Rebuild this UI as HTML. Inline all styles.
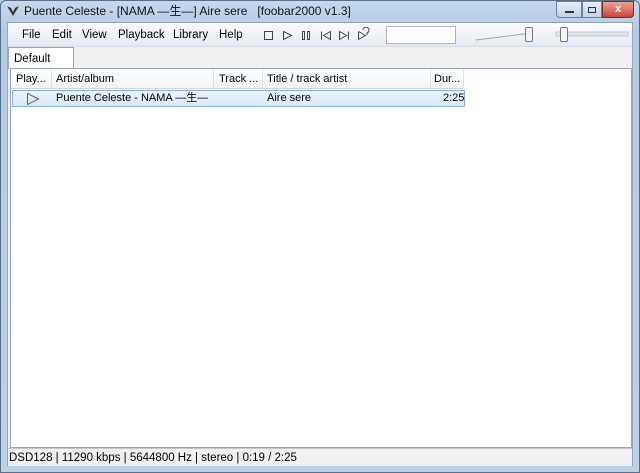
<!DOCTYPE html>
<html><head><meta charset="utf-8"><style>
*{margin:0;padding:0;box-sizing:border-box}
body{width:640px;height:473px;overflow:hidden;background:#b9d1ea;font-family:"Liberation Sans","Noto Sans CJK JP",sans-serif;font-size:11px;line-height:13px;color:#000;position:relative}
.frame{position:absolute;left:0;top:0;width:640px;height:473px;background:linear-gradient(#c5d9ee,#b4cbe6 30px,#bcd2ea);border:1px solid #5a6f88;border-radius:6px 6px 0 0}
.title{position:absolute;left:24px;top:4px;font-size:12px;line-height:14px;color:#111}
.client{position:absolute;left:7px;top:22px;width:626px;height:444px;background:#f0f0f0;border:1px solid #8ea3bc}
.bar{position:absolute;left:0;top:0;width:624px;height:24px;background:linear-gradient(#fbfcfe,#e3e9f3);border-bottom:1px solid #d5dce6}
.menu span{position:absolute;top:5px;font-size:11.5px;line-height:14px}
.list{position:absolute;left:2px;top:45px;width:622px;height:380px;background:#fff;border:1px solid #9aa6b4}
.hdr{position:absolute;left:0;top:0;width:453px;height:20px;background:linear-gradient(#fff,#f1f3f6);border-bottom:1px solid #d5d5d5}
.hdr span{position:absolute;top:4px}
.sep{position:absolute;top:0;width:1px;height:20px;background:#dde1e6}
.row{position:absolute;left:1px;top:21px;width:453px;height:17px;background:linear-gradient(#eef5fd,#d8e8f9);border:1px solid #84acdd}
.row span{position:absolute;top:1px;line-height:13px;height:14px;overflow:hidden}
.status{position:absolute;left:0;top:425px;width:624px;height:18px;background:#f0f0f0;border-top:1px solid #c8c8c8}
</style></head><body>
<div class="frame"></div>
<svg style="position:absolute;left:6px;top:4px" width="14" height="13"><path d="M1 2 L7 12 L13 2 L9 4 L7 8 L5 4Z" fill="#333"/></svg>
<div class="title">Puente Celeste - [NAMA —生—] Aire sere &nbsp; [foobar2000 v1.3]</div>
<div style="position:absolute;left:556px;top:1px;width:26px;height:17px;border:1px solid #6d7f96;border-radius:0 0 0 4px;background:linear-gradient(#e6eef8,#c2d3e8)"><div style="margin:9px 8px;width:9px;height:2px;background:#333"></div></div>
<div style="position:absolute;left:582px;top:1px;width:20px;height:17px;border:1px solid #6d7f96;background:linear-gradient(#e6eef8,#c2d3e8)"><div style="margin:5px 5px;width:8px;height:6px;border:1px solid #333"></div></div>
<div style="position:absolute;left:602px;top:1px;width:32px;height:17px;border:1px solid #7a2a22;border-radius:0 0 4px 0;background:linear-gradient(#e8a59a,#c9463a);color:#fff;font-weight:bold;text-align:center;font-size:11px;line-height:15px">x</div>
<div class="client">
<div class="bar">
<div class="menu"><span style="left:14px">File</span><span style="left:44px">Edit</span><span style="left:74px">View</span><span style="left:110px">Playback</span><span style="left:165px">Library</span><span style="left:211px">Help</span></div>
<svg style="position:absolute;left:250px;top:4px" width="130" height="17" fill="none" stroke="#444" stroke-width="1">
<rect x="6.5" y="4.5" width="8" height="8"/><path d="M25.5 4.5 L33.5 8.5 L25.5 12.5Z"/><rect x="44.5" y="4.5" width="2" height="8"/><rect x="49.5" y="4.5" width="2" height="8"/>
<path d="M63.5 4.5v8M72.5 4.5 L65.5 8.5 L72.5 12.5Z"/><path d="M90.5 4.5v8M81.5 4.5 L88.5 8.5 L81.5 12.5Z"/><path d="M100.5 4.5v8M100.5 4.5 L107.5 8.5 L100.5 12.5M105 3a3 3 0 1 1 4 3v2"/></svg>
<div style="position:absolute;left:378px;top:3px;width:70px;height:18px;background:#fff;border:1px solid #abb3be"></div>
<svg style="position:absolute;left:464px;top:3px" width="160" height="18"><path d="M4 14 L60 7" stroke="#9aa6b6"/><rect x="53.5" y="1.5" width="7" height="14" rx="1.5" fill="#f4f4f4" stroke="#777"/><rect x="84" y="6" width="72" height="4" fill="#e2e6ec" stroke="#c3cad4"/><rect x="88.5" y="1.5" width="7" height="14" rx="1.5" fill="#f4f4f4" stroke="#777"/></svg>
</div>
<div style="position:absolute;left:0;top:24px;width:66px;height:22px;background:#fff;border:1px solid #9aa6b4;border-bottom:none;padding:4px 5px;font-size:11.5px;line-height:14px">Default</div>
<div class="list">
<div class="hdr"><span style="left:5px">Play...</span><div class="sep" style="left:40px"></div><span style="left:45px">Artist/album</span><div class="sep" style="left:202px"></div><span style="left:208px">Track ...</span><div class="sep" style="left:251px"></div><span style="left:256px">Title / track artist</span><div class="sep" style="left:419px"></div><span style="left:423px">Dur...</span><div class="sep" style="left:452px"></div></div>
<div class="row"><svg style="position:absolute;left:13px;top:1px" width="14" height="14"><path d="M1.5 1.5 L12.5 7 L1.5 12.5Z" fill="none" stroke="#666"/></svg><span style="left:43px">Puente Celeste - NAMA —生—</span><span style="left:254px">Aire sere</span><span style="left:430px">2:25</span></div>
</div>
<div class="status"><span style="position:absolute;left:1px;top:2px;font-size:11.5px;line-height:14px">DSD128 | 11290 kbps | 5644800 Hz | stereo | 0:19 / 2:25</span></div>
</div>
</body></html>
